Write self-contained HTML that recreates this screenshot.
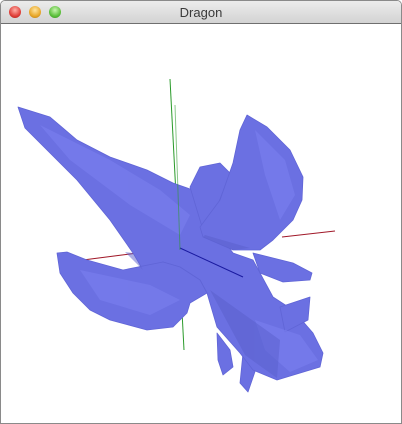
<!DOCTYPE html><html><head><style>
html,body{margin:0;padding:0;width:402px;height:424px;overflow:hidden;background:#fff}
.win{position:absolute;left:0;top:0;width:400px;height:422px;border:1px solid #8a8a8a;border-radius:5px 5px 0 0;background:#fff;overflow:hidden}
.tb{height:22px;background:linear-gradient(#ececec,#d3d3d3);border-bottom:1px solid #6f6f6f;position:relative}
.tb span{position:absolute;left:0;right:0;top:4px;text-align:center;font:13px "Liberation Sans",sans-serif;color:#3a3a3a}
.b{position:absolute;top:5px;width:12px;height:12px;border-radius:50%}
</style></head><body><div class="win">
<div class="tb"><div class="b" style="left:8px;background:radial-gradient(circle at 50% 35%,#ffb0a8,#e0403a 60%,#a01e18)"></div><div class="b" style="left:28px;background:radial-gradient(circle at 50% 35%,#ffe4a0,#e8a82a 60%,#b07010)"></div><div class="b" style="left:48px;background:radial-gradient(circle at 50% 35%,#c8f5b0,#5cc03c 60%,#2f8a1a)"></div><span>Dragon</span></div>
</div>
<svg style="position:absolute;left:0;top:0" width="402" height="424">
<line x1="170" y1="79" x2="184" y2="350" stroke="#2a9a2a" stroke-width="1"/>
<line x1="83" y1="260" x2="192" y2="246" stroke="#a01828" stroke-width="1"/>
<g fill="#6b70e2" stroke="#6065d6" stroke-width="0.8" stroke-linejoin="round">
<path d="M217,333 L230,350 L233,367 L223,375 L218,360Z"/>
<path d="M243,353 L260,357 L248,392 L240,383Z"/>
<path d="M18,107 L50,117 L77,140 L110,157 L147,170 L173,183 L193,190 L205,215 L233,253 L253,260 L273,297 L293,310 L313,333 L323,353 L320,367 L277,380 L253,370 L240,353 L217,327 L207,293 L200,280 L180,267 L163,262 L143,270 L133,253 L110,220 L77,180 L25,128Z"/>
<path d="M57,253 L67,252 L87,260 L123,270 L163,262 L180,267 L200,280 L207,293 L190,303 L187,313 L173,327 L147,330 L110,320 L90,310 L73,293 L60,273Z"/>
<path d="M190,187 L200,167 L220,163 L230,173 L217,207 L203,230Z"/>
<path d="M247,115 L267,127 L290,150 L303,177 L302,200 L293,220 L273,240 L260,250 L233,250 L203,237 L200,227 L220,200 L233,163 L240,130Z"/>
<path d="M253,253 L293,263 L312,273 L310,280 L283,282 L260,273Z"/>
<path d="M280,307 L310,297 L308,320 L285,332Z"/>
</g>
<g fill="#7c82f0" opacity=".55"><path d="M40,125 L110,160 L160,190 L190,215 L180,235 L130,205 L70,160Z"/><path d="M255,130 L285,160 L295,195 L280,220 L265,175Z"/><path d="M255,320 L300,335 L318,360 L290,372 L265,350Z"/><path d="M80,270 L150,285 L180,300 L150,315 L100,300Z"/></g>
<g fill="#5a5fcc" opacity=".5"><path d="M205,235 L250,248 L233,250 L203,237Z"/><path d="M210,290 L280,340 L277,378 L245,355Z"/><path d="M125,252 L143,270 L133,253Z"/></g>
<line x1="282" y1="237" x2="335" y2="231" stroke="#a01828" stroke-width="1"/>
<line x1="180" y1="248" x2="243" y2="277" stroke="#1a1aa0" stroke-width="1"/>
<line x1="175" y1="105" x2="180" y2="250" stroke="#2a9a2a" stroke-width="1" opacity=".55"/>
</svg>
</body></html>
